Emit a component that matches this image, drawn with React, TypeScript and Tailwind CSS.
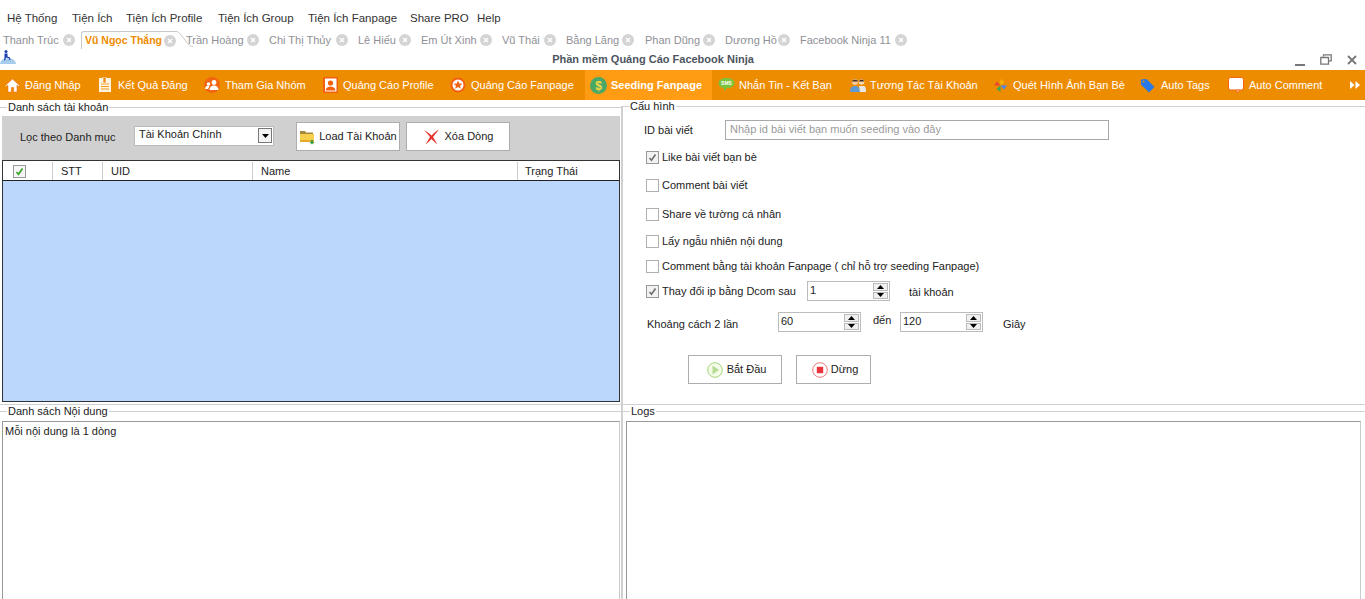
import React from "react";

const menu = [
  ["Hệ Thống", "w-[65px]"],
  ["Tiện Ích", "w-[54px]"],
  ["Tiện Ích Profile", "w-[92px]"],
  ["Tiện Ích Group", "w-[90px]"],
  ["Tiện Ích Fanpage", "w-[102px]"],
  ["Share PRO", "w-[67px]"],
  ["Help", "w-[40px]"],
];

const tabs = [
  ["Trần Hoàng", "w-[61px]", "ml-[10px]"],
  ["Chi Thị Thủy", "w-[67px]", "ml-[10px]"],
  ["Lê Hiếu", "w-[41px]", "ml-[10px]"],
  ["Em Út Xinh", "w-[59px]", "ml-[10px]"],
  ["Vũ Thái", "w-[42px]", "ml-[10px]"],
  ["Bằng Lăng", "w-[56px]", "ml-[10px]"],
  ["Phan Dũng", "w-[58px]", "ml-[11px]"],
  ["Dương Hồ", "w-[53px]", "ml-[10px]"],
  ["Facebook Ninja 11", "w-[95px]", "ml-[10px]"],
];

function Close() {
  return (
    <svg width="12" height="12" viewBox="0 0 12 12" className="shrink-0">
      <circle cx="6" cy="6" r="6" fill="#d4d4d4" />
      <path d="M4 4l4 4M8 4l-4 4" stroke="#fff" strokeWidth="1.4" />
    </svg>
  );
}

function Tab({ t, w, m }: { t: string; w: string; m: string }) {
  return (
    <div className={`flex items-center ${m}`}>
      <span className={`${w} whitespace-nowrap text-[#8f8f96] text-[11px]`}>{t}</span>
      <Close />
    </div>
  );
}

const Home = () => (
  <svg width="15" height="15" viewBox="0 0 15 15"><path d="M7.500 1L0.500 7.500l1 1L3 7v7h3.300V9.500h2.400V14H12V7l1.500 1.500 1-1z" fill="#fff" stroke="#f2600f" strokeWidth=".5" /></svg>
);
const Note = () => (
  <svg width="14" height="16" viewBox="0 0 14 16"><rect x="1" y="1" width="12" height="14" fill="#fff4e0" /><path d="M3 7h8M3 9.500h8M3 12h8" stroke="#f39a1e" /><rect x="5" y="0" width="3" height="6" fill="#f08a10" stroke="#fff" strokeWidth=".6" /></svg>
);
const Group = () => (
  <svg width="16" height="16" viewBox="0 0 16 16"><circle cx="8" cy="8" r="8" fill="#f2650f" /><circle cx="10" cy="5.500" r="2.400" fill="#fff" /><path d="M5.500 13c0-3 2-4.500 4.500-4.500s4.500 1.500 4.500 4.500z" fill="#fff" /><circle cx="4.500" cy="7" r="1.800" fill="#fff" /><path d="M1 12c0-2 1.500-3.500 3.500-3.500l1 .8L4 12z" fill="#fff" /></svg>
);
const Profile = () => (
  <svg width="15" height="16" viewBox="0 0 15 16"><rect width="15" height="16" rx="1" fill="#f2600f" /><rect x="2" y="1.500" width="11.500" height="13" fill="#fff" /><circle cx="7.500" cy="6" r="2.600" fill="#f2600f" /><path d="M2.500 13.500c.5-3 2.500-4 5-4s4.500 1 5 4z" fill="#f2600f" /></svg>
);
const Star = () => (
  <svg width="16" height="16" viewBox="0 0 16 16"><circle cx="8" cy="8" r="7.500" fill="#f2600f" /><circle cx="8" cy="8" r="5.500" fill="#fff" /><path d="M8 3.500l1.300 3 3.200.2-2.500 2 .9 3.100L8 10l-2.900 1.800.9-3.100-2.500-2 3.200-.2z" fill="#f2600f" /></svg>
);
const Dollar = () => (
  <svg width="17" height="17" viewBox="0 0 17 17"><circle cx="8.500" cy="8.500" r="8.500" fill="#4aa866" /><text x="8.500" y="13" textAnchor="middle" fontSize="12" fontWeight="700" fill="#f6d94a" fontFamily="Liberation Sans">$</text></svg>
);
const Sms = () => (
  <svg width="17" height="16" viewBox="0 0 17 16"><path d="M8.500 1C4 1 .5 3 .5 6s2.500 4.500 5 5l1 3.500 2-3.300c4.500 0 8-2 8-5.200S13 1 8.500 1z" fill="#7cc23a" /><text x="8.500" y="8" textAnchor="middle" fontSize="5" fontWeight="700" fill="#fff" fontFamily="Liberation Sans">SMS</text></svg>
);
const People = () => (
  <svg width="16" height="15" viewBox="0 0 16 15"><circle cx="5" cy="4" r="3" fill="#f6c89a" /><path d="M2 3.500C2 1 8 1 8 3.500z" fill="#4a3020" /><path d="M0 14c0-4 2-6 5-6s5 2 5 6z" fill="#5d9bd6" /><circle cx="11.500" cy="4" r="2.800" fill="#fbd7b0" /><path d="M9 3.500C9 1 14 1 14 3.500z" fill="#3a2a1a" /><path d="M9 8h5c1.500 0 2 2 2 6h-6z" fill="#e6e6e6" /></svg>
);
const Pin = () => (
  <svg width="15" height="15" viewBox="0 0 15 15"><path d="M7.500 7.500V1l4 3z" fill="#f4b400" /><path d="M7.500 7.500H14l-3 4z" fill="#4285f4" /><path d="M7.500 7.500V14l-4-3z" fill="#34a853" /><path d="M7.500 7.500H1l3-4z" fill="#ea4335" /></svg>
);
const TagIcon = () => (
  <svg width="15" height="15" viewBox="0 0 15 15"><path d="M1 1.500L6.500 1 14.500 9 9 14.500 1 6.500z" fill="#2979e8" /><circle cx="3.500" cy="3.500" r="1" fill="#ee8c00" /></svg>
);
const Bubble = () => (
  <svg width="16" height="17" viewBox="0 0 16 17"><rect x=".5" y=".5" width="15" height="12.500" rx="2" fill="#fff" stroke="#f4620f" /><path d="M9 13v3l3-3z" fill="#fff" stroke="#f4620f" strokeWidth=".8" /></svg>
);

type NavT = [string, React.ReactNode, string, string];
const nav: NavT[] = [
  ["Đăng Nhập", <Home />, "w-[93px]", "w-[20px]"],
  ["Kết Quả Đăng", <Note />, "w-[106px]", "w-[20px]"],
  ["Tham Gia Nhóm", <Group />, "w-[119px]", "w-[21px]"],
  ["Quảng Cáo Profile", <Profile />, "w-[127px]", "w-[20px]"],
  ["Quảng Cáo Fanpage", <Star />, "w-[140px]", "w-[21px]"],
];
const nav2: NavT[] = [
  ["Nhắn Tin - Kết Bạn", <Sms />, "w-[132px]", "w-[21px]"],
  ["Tương Tác Tài Khoản", <People />, "w-[143px]", "w-[20px]"],
  ["Quét Hình Ảnh Bạn Bè", <Pin />, "w-[147px]", "w-[20px]"],
  ["Auto Tags", <TagIcon />, "w-[88px]", "w-[21px]"],
  ["Auto Comment", <Bubble />, "w-[122px]", "w-[21px]"],
];

function NavItem({ item }: { item: NavT }) {
  return (
    <div className={`${item[2]} flex items-center pl-[5px] shrink-0`}>
      <span className={`${item[3]} shrink-0 flex items-center`}>{item[1]}</span>
      <span className="whitespace-nowrap text-white">{item[0]}</span>
    </div>
  );
}

function GroupLabel({ t, l }: { t: string; l: string }) {
  return (
    <div className="flex items-center h-[12px]">
      <div className={`${l} h-px bg-[#d0d0d0]`} />
      <span className="px-px leading-[12px] whitespace-nowrap text-[#222]">{t}</span>
      <div className="flex-1 h-px bg-[#d0d0d0]" />
    </div>
  );
}

function Check({ on }: { on?: boolean }) {
  return (
    <span className={`w-[13px] h-[13px] border flex items-center justify-center shrink-0 ${on ? "border-[#999] bg-[#f2f2f2]" : "border-[#b0b0b0] bg-white"}`}>
      {on && (
        <svg width="9" height="9" viewBox="0 0 9 9"><path d="M1.500 5l2 2.300L7.500 1.500" fill="none" stroke="#6e6e6e" strokeWidth="1.600" /></svg>
      )}
    </span>
  );
}

function CheckRow({ t, on, h }: { t: string; on?: boolean; h: string }) {
  return (
    <div className={`flex items-center ${h} pl-[23px] gap-[3px]`}>
      <Check on={on} />
      <span className="whitespace-nowrap text-[#222]">{t}</span>
    </div>
  );
}

function Spin({ v, w }: { v: string; w: string }) {
  return (
    <div className={`${w} h-[20px] border border-[#bcbcbc] bg-white flex shrink-0`}>
      <span className="flex-1 pl-[2px] leading-[16px] text-[#222]">{v}</span>
      <div className="w-[15px] mr-px my-px flex flex-col gap-px">
        <div className="h-[8px] bg-[#f0f0f0] border border-[#bbb] flex items-center justify-center">
          <svg width="7" height="4" viewBox="0 0 7 4"><path d="M3.500 0L7 4H0z" fill="#000" /></svg>
        </div>
        <div className="h-[8px] bg-[#f0f0f0] border border-[#bbb] flex items-center justify-center">
          <svg width="7" height="4" viewBox="0 0 7 4"><path d="M0 0h7L3.500 4z" fill="#000" /></svg>
        </div>
      </div>
    </div>
  );
}

function Btn({ w, icon, t, gap }: { w: string; icon: React.ReactNode; t: string; gap: string }) {
  return (
    <div className={`${w} border border-[#adadad] bg-white flex items-center justify-center ${gap} shrink-0`}>
      {icon}
      <span className="whitespace-nowrap text-[#222]">{t}</span>
    </div>
  );
}

export default function App() {
  return (
    <div className="w-[1365px] h-[599px] overflow-hidden bg-white text-[11px] font-['Liberation_Sans',sans-serif] flex flex-col">
      {/* menu */}
      <div className="h-[31px] pt-[7px] pl-[7px] flex items-center text-[#333] text-[11.5px]">
        {menu.map(([t, w]) => (
          <span key={t} className={`${w} whitespace-nowrap`}>{t}</span>
        ))}
      </div>
      {/* tabs */}
      <div className="h-[18px] flex items-stretch">
        <Tab t="Thanh Trúc" w="w-[60px]" m="ml-[3px]" />
        <div className="ml-[6px] w-[95px] h-[18px] pl-[3px] flex items-center border-l border-t border-[#c8c8c8] rounded-tl-[3px] relative">
          <span className="w-[79px] font-bold whitespace-nowrap text-[#ee8c00] text-[10.5px]">Vũ Ngọc Thắng</span>
          <Close />
          <svg width="18" height="18" viewBox="0 0 18 18" className="absolute -top-px left-[93px]">
            <path d="M0 .5h1c2 0 3 1 5 3.500l8 10c1 1 2 1.500 4 1.500" fill="none" stroke="#c8c8c8" />
          </svg>
        </div>
        {tabs.map(([t, w, m]) => (
          <Tab key={t} t={t} w={w} m={m} />
        ))}
      </div>
      {/* title */}
      <div className="h-[21px] flex items-center">
        <svg width="16" height="14" viewBox="0 0 16 14" className="shrink-0 self-start mt-px">
          <path d="M0 14c.5-3 2-4.500 4-5l4-1 4 1c2 .5 3.500 2 4 5z" fill="#a6cdec" />
          <circle cx="6" cy="1.500" r="1.500" fill="#1a3fae" />
          <path d="M4.500 3.500h3v3l2.500 1 .5 2.500-1 .3-.5-2-3-.8-1 3H4l.5-3.500z" fill="#1a3fae" />
        </svg>
        <div className="flex-1 text-center font-bold text-[#4d5560] mr-[5px]">Phần mềm Quảng Cáo Facebook Ninja</div>
        <div className="flex items-center w-[70px] shrink-0 pr-[8px] justify-between">
          <svg width="10" height="12" viewBox="0 0 10 12"><path d="M0 10h10v2H0z" fill="#777" /></svg>
          <svg width="12" height="11" viewBox="0 0 12 11"><path d="M3.500 2.500V.8h7.700v6H9M.8 3.500h7.700v6.700H.8z" fill="none" stroke="#777" strokeWidth="1.300" /></svg>
          <svg width="10" height="10" viewBox="0 0 10 10"><path d="M1 1l8 8M9 1l-8 8" stroke="#777" strokeWidth="1.800" /></svg>
        </div>
      </div>
      {/* orange bar */}
      <div className="h-[30px] bg-[#ee8c00] flex items-stretch">
        {nav.map((n) => (
          <NavItem key={n[0]} item={n} />
        ))}
        <div className="w-[127px] mr-px bg-[#ff9c14] flex items-center pl-[5px] shrink-0">
          <span className="w-[21px] shrink-0 flex items-center"><Dollar /></span>
          <span className="whitespace-nowrap font-bold text-white">Seeding Fanpage</span>
        </div>
        {nav2.map((n) => (
          <NavItem key={n[0]} item={n} />
        ))}
        <div className="flex-1 flex items-center justify-end pr-[5px]">
          <svg width="10" height="8" viewBox="0 0 10 8"><path d="M0 0l4.500 4L0 8zM5.500 0L10 4 5.500 8z" fill="#fff" /></svg>
        </div>
      </div>
      {/* upper */}
      <div className="h-[304px] flex">
        <div className="w-[621px] shrink-0 pt-[1px]">
          <GroupLabel t="Danh sách tài khoản" l="w-[7px]" />
          <div className="ml-[2px] mr-[1px] mt-[3px] h-[44px] bg-[#d0d0d0] flex items-center">
            <span className="ml-[18px] w-[114px] text-[#222] whitespace-nowrap -mt-[1px]">Lọc theo Danh mục</span>
            <div className="w-[140px] h-[20px] border border-[#bbb] bg-white flex items-center justify-between pl-[4px] pr-px -mt-[5px] shrink-0">
              <span className="text-[#222] whitespace-nowrap -mt-[2px]">Tài Khoản Chính</span>
              <span className="w-[14px] h-[15px] border border-[#777] bg-[#f4f4f4] flex items-center justify-center">
                <svg width="7" height="4" viewBox="0 0 7 4"><path d="M0 0h7L3.500 4z" fill="#000" /></svg>
              </span>
            </div>
            <div className="ml-[22px] flex gap-[6px] h-[29px] -mt-[3px]">
              <Btn
                w="w-[104px]"
                gap="gap-[4px]"
                t="Load Tài Khoản"
                icon={
                  <svg width="16" height="16" viewBox="0 0 16 16"><path d="M1 2h5l1 1.500h7V6H1z" fill="#a38a3c" /><path d="M1 5h14v8H1z" fill="#f7cf4d" /><path d="M1 11h14v2H1z" fill="#e3a92c" /><path d="M12 11h2v2h1.500L13 15.500 10.500 13H12z" fill="#3aa040" /></svg>
                }
              />
              <Btn
                w="w-[104px]"
                gap="gap-[5px]"
                t="Xóa Dòng"
                icon={
                  <svg width="17" height="16" viewBox="0 0 17 16"><path d="M1 1c3 1.500 5 3.500 7.500 5.500C11 4 13 2 16 .5 13.500 3.500 11.500 6 10 8c1.500 2.500 3 5 4.500 7.500C12.500 14 10.500 12 8.500 10 6.500 12 4.500 14 2.500 15.500 4 13 5.500 10.500 7 8 5 5.500 3 3 1 1z" fill="#e5342b" /></svg>
                }
              />
            </div>
          </div>
          <div className="ml-[2px] mr-[1px] h-[242px] border border-[#333] bg-[#bbd7fb] flex flex-col">
            <div className="h-[20px] pt-px bg-white border-b border-[#222] flex items-stretch shrink-0 text-[#222]">
              <div className="w-[50px] border-r border-[#ccc] flex items-center pl-[10px]">
                <span className="w-[13px] h-[13px] border border-[#999] bg-[#f6f6f6] flex items-center justify-center">
                  <svg width="9" height="9" viewBox="0 0 9 9"><path d="M1.500 5l2 2.300L7.500 1.500" fill="none" stroke="#3fa52f" strokeWidth="1.800" /></svg>
                </span>
              </div>
              <div className="w-[50px] border-r border-[#ccc] flex items-center pl-[8px]">STT</div>
              <div className="w-[150px] border-r border-[#ccc] flex items-center pl-[8px]">UID</div>
              <div className="w-[265px] border-r border-[#ccc] flex items-center pl-[8px]">Name</div>
              <div className="flex-1 flex items-center pl-[7px]">Trạng Thái</div>
            </div>
          </div>
        </div>
        <div className="flex-1 flex flex-col border-l-2 border-[#d0d0d0] mt-[6px]">
          <div className="-mt-[6px]">
            <GroupLabel t="Cấu hình" l="w-[6px]" />
          </div>
          <div className="flex items-center h-[29px] pl-[21px] mt-[3px]">
            <span className="w-[81px] text-[#222] mt-[2px]">ID bài viết</span>
            <div className="w-[384px] h-[20px] border border-[#a8a8a8] pl-[4px] flex items-center text-[#9a9a9a]">
              <span className="whitespace-nowrap">Nhập id bài viết bạn muốn seeding vào đây</span>
            </div>
          </div>
          <CheckRow t="Like bài viết bạn bè" on h="h-[26px]" />
          <CheckRow t="Comment bài viết" h="h-[30px]" />
          <CheckRow t="Share về tường cá nhân" h="h-[28px]" />
          <CheckRow t="Lấy ngẫu nhiên nội dung" h="h-[26px]" />
          <CheckRow t="Comment bằng tài khoản Fanpage ( chỉ hỗ trợ seeding Fanpage)" h="h-[25px]" />
          <div className="flex items-center h-[24px] pl-[23px]">
            <Check on />
            <span className="ml-[3px] w-[145px] whitespace-nowrap text-[#222]">Thay đổi ip bằng Dcom sau</span>
            <Spin v="1" w="w-[83px]" />
            <span className="ml-[19px] mt-[2px] text-[#222] whitespace-nowrap">tài khoản</span>
          </div>
          <div className="flex items-center h-[38px] pl-[24px]">
            <span className="w-[131px] whitespace-nowrap text-[#222] mt-[4px]">Khoảng cách 2 lần</span>
            <Spin v="60" w="w-[83px]" />
            <span className="ml-[12px] w-[27px] -mt-[4px] text-[#222]">đến</span>
            <Spin v="120" w="w-[83px]" />
            <span className="ml-[20px] mt-[4px] text-[#222]">Giây</span>
          </div>
          <div className="flex h-[29px] pl-[65px] gap-[14px] mt-[14px]">
            <Btn
              w="w-[94px]"
              gap="gap-[4px] pl-[3px]"
              t="Bắt Đầu"
              icon={
                <svg width="16" height="16" viewBox="0 0 16 16"><circle cx="8" cy="8" r="7.300" fill="#f4fbe9" stroke="#a3d47c" /><path d="M5.500 3.500L12 8l-6.500 4.500z" fill="#b5dc94" /></svg>
              }
            />
            <Btn
              w="w-[75px]"
              gap="gap-[3px] pl-[3px]"
              t="Dừng"
              icon={
                <svg width="16" height="16" viewBox="0 0 16 16"><circle cx="8" cy="8" r="7.300" fill="#fff" stroke="#ec7a80" /><rect x="4.800" y="4.800" width="6.400" height="6.400" fill="#e8333c" /></svg>
              }
            />
          </div>
        </div>
      </div>
      <div className="h-px bg-[#d0d0d0] shrink-0" />
      {/* lower */}
      <div className="flex flex-1 min-h-0">
        <div className="w-[621px] shrink-0">
          <GroupLabel t="Danh sách Nội dung" l="w-[7px]" />
          <div className="ml-[2px] mr-[1px] mt-[4px] h-[200px] border border-[#999] border-r-[#ccc] bg-white pl-[2px] pt-[1px] text-[#222]">
            Mỗi nội dung là 1 dòng
          </div>
        </div>
        <div className="flex-1 border-l-2 border-[#d0d0d0]">
          <GroupLabel t="Logs" l="w-[7px]" />
          <div className="ml-[3px] mr-[4px] mt-[4px] h-[200px] border border-[#999] border-r-[#ccc] bg-white" />
        </div>
      </div>
    </div>
  );
}
